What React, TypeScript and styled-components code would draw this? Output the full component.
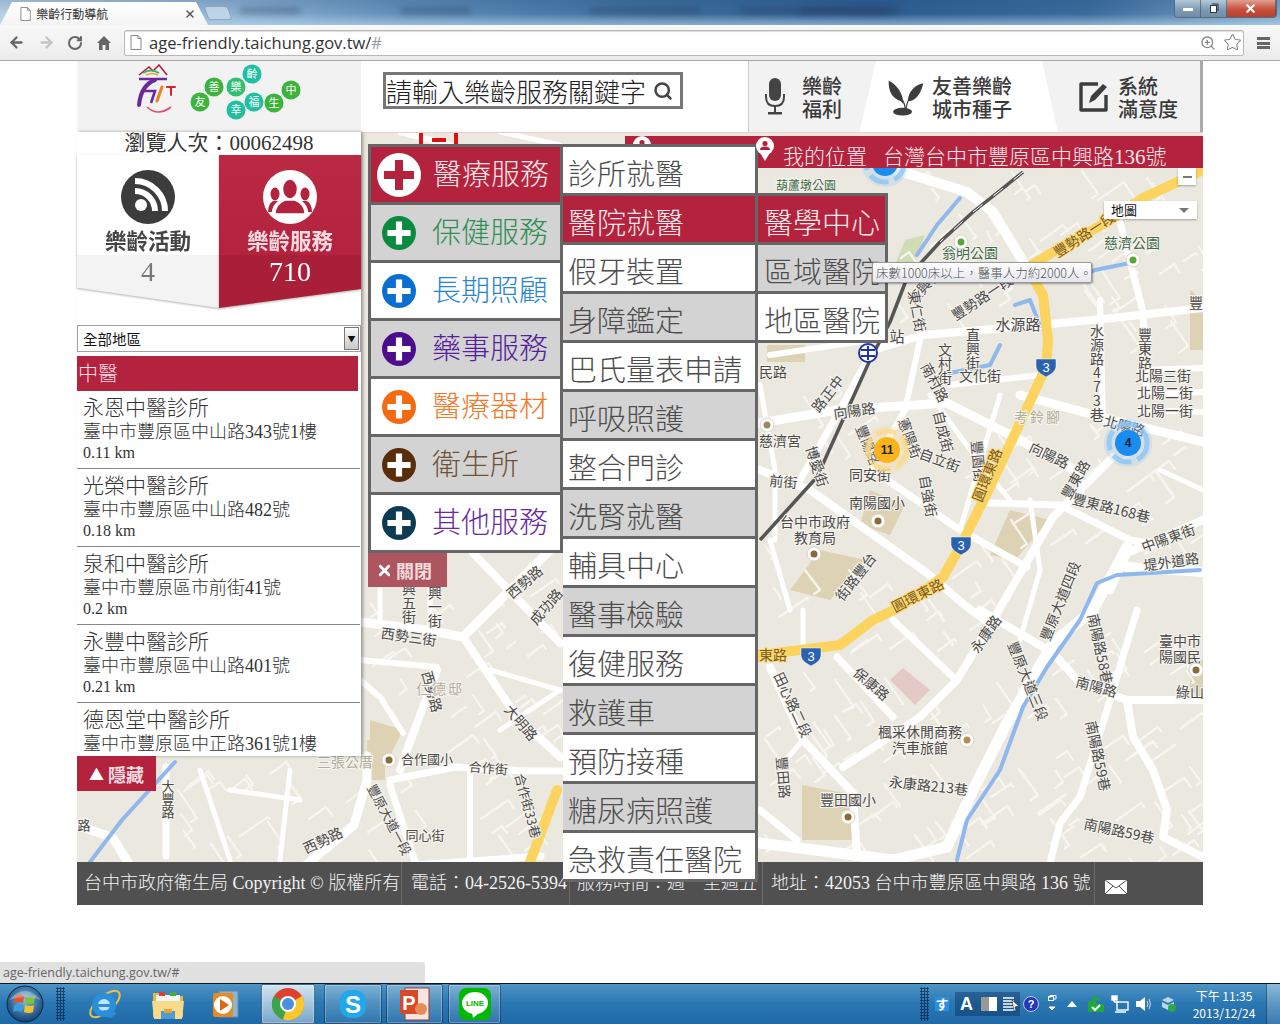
import React from "react";
import styled, { createGlobalStyle } from "styled-components";
import { ArrowLeft, ArrowRight, RotateCw, Search, Star, ZoomIn, X } from "lucide-react";

const CJK = `"Liberation Serif", "Noto Sans CJK TC", serif`;
const CRIMSON = "#b3233d";

const Global = createGlobalStyle`
  html, body { margin: 0; padding: 0; background: #fff; }
  body { font-family: ${CJK}; overflow: hidden; }
  * { box-sizing: border-box; }
`;

const Screen = styled.div`
  width: 1280px; height: 1024px; display: flex; flex-direction: column; position: relative; overflow: hidden;
`;

/* ---------- browser chrome ---------- */
const TitleBar = styled.div`
  height: 25px; flex: none; position: relative; overflow: hidden;
  background:
    linear-gradient(180deg, rgba(30,70,120,.18) 0, rgba(255,255,255,0) 55%, rgba(190,220,240,.6) 100%),
    linear-gradient(90deg, #b7cfe3 0, #8fb2d2 18%, #5f8db8 32%, #3f6f9e 50%, #2c5c90 68%, #3a6b9c 85%, #7ea6c8 100%);
`;
const BlurText = styled.div<{ $x: number; $w: number }>`
  position: absolute; left: ${p => p.$x}px; width: ${p => p.$w}px; top: 8px; height: 5px;
  background: rgba(40,60,90,.45); filter: blur(3px);
`;
const TabShape = styled.div`
  position: absolute; left: 0; top: 2px; width: 208px; height: 23px; padding: 0 0 0 20px;
  background: linear-gradient(180deg, #fff, #f4f4f4);
  clip-path: polygon(0 100%, 12px 0, 196px 0, 100% 100%);
  display: flex; align-items: center; gap: 5px;
  font: 12px "Noto Sans CJK TC", sans-serif; color: #333;
`;
const TabTitle = styled.span` width: 143px; `;
const NewTab = styled.div`
  position: absolute; left: 206px; top: 6px; width: 24px; height: 14px;
  background: rgba(200,220,235,.8); border: 1px solid rgba(120,150,180,.7); border-radius: 3px;
  transform: skewX(20deg);
`;
const WinButtons = styled.div`
  position: absolute; right: 3px; top: 0; width: 103px; height: 18px; display: flex;
  border: 1px solid #5a6b80; border-top: 0; border-radius: 0 0 4px 4px; overflow: hidden;
`;
const WinBtn = styled.div<{ $close?: boolean; $w: number }>`
  width: ${p => p.$w}px; display: flex; align-items: center; justify-content: center; color: #fff;
  border-right: 1px solid rgba(60,80,100,.6);
  background: ${p => p.$close
    ? "linear-gradient(180deg,#e0a090,#c8503c 55%,#b84030)"
    : "linear-gradient(180deg,#b4c8da,#7f9bb5 55%,#6f8da8)"};
`;

const Toolbar = styled.div`
  height: 36px; flex: none; display: flex; align-items: center; padding: 0 8px; color: #6a6a6a;
  background: linear-gradient(180deg, #f8f8f8, #ececec); border-bottom: 1px solid #a8a8a8;
`;
const NavIcon = styled.span<{ $w: number; $c?: string }>`
  width: ${p => p.$w}px; display: flex; align-items: center; color: ${p => p.$c || "#666"};
`;
const Omnibox = styled.div`
  width: 1120px; height: 26px; background: #fff; border: 1px solid #bdb8b4; border-radius: 2px;
  display: flex; align-items: center; padding: 0 1px 0 5px; gap: 7px;
  font: 16.5px "Open Sans", "Liberation Sans", sans-serif; color: #333; box-shadow: inset 0 1px 1px #ddd;
`;
const UrlHash = styled.span` color: #999; margin-left: -7px; `;
const Spacer = styled.span` flex: 1; `;
const Burger = styled.div`
  margin-left: 13px; width: 13px; height: 12px; border-top: 3px solid #666; border-bottom: 3px solid #666; position: relative;
  &::after { content: ""; position: absolute; left: 0; right: 0; top: 2px; height: 3px; background: #666; }
`;

/* ---------- page frame ---------- */
const Viewport = styled.div` flex: 1; background: #fff; padding-left: 77px; `;
const Frame = styled.div` width: 1126px; `;

const Header = styled.header` height: 71px; display: flex; align-items: stretch; background: #fff; `;
const LogoBlock = styled.div`
  width: 284px; background: #f2f2f2; display: flex; justify-content: center; align-items: flex-start; padding-top: 3px;
`;
const SearchBox = styled.div`
  margin: 11px 0 0 22px; width: 300px; height: 37px; border: 3px solid #777; display: flex; align-items: center;
  font: 26px/1 "Noto Sans CJK TC", sans-serif; font-weight: 300; color: #222; gap: 2px; white-space: nowrap;
  overflow: hidden;
`;
const Nav = styled.nav`
  margin-left: 65px; width: 455px; display: flex; position: relative; border-right: 3px solid #aaa; border-left: 1px solid #ccc;
  font: 500 20px/23px "Noto Sans CJK TC", sans-serif; color: #3a3a3a; overflow: hidden;
`;
const NavTab = styled.div<{ $w: number; $clip: string; $bg: string; $pl: number; $gap: number }>`
  width: ${p => p.$w}px; flex: none; display: flex; align-items: center; gap: ${p => p.$gap}px; padding-left: ${p => p.$pl}px;
  background: ${p => p.$bg}; clip-path: ${p => p.$clip}; margin-right: -16px;
`;
const NavLabel = styled.div` white-space: nowrap; `;

const Stage = styled.div`
  height: 730px; position: relative; display: flex; align-items: flex-start; overflow: visible;
  &::before { content: ""; position: absolute; left: 0; right: 0; top: 0; height: 1px; background: #f3c9d0; z-index: 1; }
`;
const MapLayer = styled.svg` position: absolute; left: 0; top: 0; width: 1126px; height: 730px; display: block; `;

const LeftColumn = styled.div` width: 284px; position: relative; z-index: 2; display: flex; flex-direction: column; align-items: flex-start; `;
const Sidebar = styled.aside`
  width: 284px; height: 624px; background: #fff; box-shadow: 2px 0 3px rgba(0,0,0,.35);
`;
const Visits = styled.div` height: 23px; padding-top: 1px; text-align: center; font-size: 21px; line-height: 20px; color: #333; `;
const Tabs = styled.div` display: flex; height: 153px; `;
const TabCol = styled.div` width: 142px; display: flex; flex-direction: column; filter: drop-shadow(0 1px 1px rgba(0,0,0,.3)); `;
const TabTop = styled.div<{ $active?: boolean }>`
  height: 100px; display: flex; flex-direction: column; align-items: center; padding-top: 15px; gap: 3px;
  background: ${p => p.$active ? "linear-gradient(180deg,#bb2a44,#b3233d)" : "#fff"};
  color: ${p => p.$active ? "#f7dbe0" : "#444"};
  font: 700 21.5px/26px "Noto Sans CJK TC", sans-serif;
`;
const TabCount = styled.div<{ $active?: boolean; $clip: string }>`
  height: 53px; text-align: center; font-size: 28px; line-height: 34px;
  color: ${p => p.$active ? "#fff" : "#777"}; background: ${p => p.$active ? "#a91f38" : "#f3f3f3"};
  clip-path: ${p => p.$clip};
`;
const DistrictSelect = styled.div`
  margin-top: 17px; width: 284px; height: 27px; border: 1px solid #a0a0a0; display: flex; align-items: center; justify-content: space-between;
  font: 14.5px "Noto Sans CJK TC", sans-serif; color: #111; padding-left: 5px;
`;
const SelectArrow = styled.div`
  width: 15px; height: 23px; margin-right: 1px; border: 1px solid #777; background: linear-gradient(180deg,#fafafa,#c8c8c8);
  display: flex; align-items: center; justify-content: center; font-size: 8px; color: #111;
`;
const ListHead = styled.div`
  margin-top: 4px; width: 281px; height: 35px; background: ${CRIMSON}; color: #f6dfe3; padding-left: 1px;
  font: 300 20px/33px "Noto Sans CJK TC", sans-serif;
`;
const ClinicList = styled.div` height: 365px; overflow: hidden; `;
const ClinicRow = styled.div`
  height: 78px; padding: 3px 0 0 6px; border-bottom: 1px solid #888; color: #333; width: 283px;
`;
const ClinicName = styled.div` font: 300 21px/24px "Noto Sans CJK TC", sans-serif; `;
const ClinicAddr = styled.div` margin-top: 3px; font: 300 18px/22px "Liberation Serif", "Noto Sans CJK TC", serif; `;
const ClinicDist = styled.div` font-size: 16px; line-height: 20px; `;
const HideBtn = styled.div`
  width: 79px; height: 35px; background: ${CRIMSON}; color: #f3dde1; display: flex; align-items: center; justify-content: center;
  font: 700 18px "Noto Sans CJK TC", sans-serif; gap: 4px;
`;
const HideTri = styled.span` font-size: 15px; color: #fff; `;

/* ---------- menu ---------- */
const Menu = styled.div`
  position: absolute; left: 291px; top: 12px; display: flex; align-items: flex-start; z-index: 5;
`;
const MainWrap = styled.div` width: 195px; display: flex; flex-direction: column; `;
const MainCol = styled.div`
  background: #666; padding: 3px; display: flex; flex-direction: column; gap: 3px;
`;
const MainItem = styled.div<{ $bg: string; $c: string; $active?: boolean }>`
  height: 55px; background: ${p => p.$bg}; color: ${p => p.$c}; display: flex; align-items: center;
  padding-left: ${p => p.$active ? 6 : 11}px; gap: ${p => p.$active ? 12 : 16}px;
  font: 300 29px/51px "Noto Sans CJK TC", sans-serif; white-space: nowrap;
`;
const MainText = styled.span` position: relative; top: -2px; `;
const CloseBtn = styled.div`
  width: 79px; height: 34px; background: #ad565f; color: #f1dcdc; display: flex; align-items: center; padding-left: 8px; gap: 3px;
  font: 700 18px "Noto Sans CJK TC", sans-serif;
`;
const SubCol = styled.div<{ $w: number; $top: number }>`
  width: ${p => p.$w}px; margin-top: ${p => p.$top}px; background: #666; padding: 3px 3px 3px 0;
  display: flex; flex-direction: column; gap: 3px;
`;
const SubItem = styled.div<{ $tone: "white" | "grey" | "active"; $pl: number }>`
  height: 46px; padding: 3px 0 0 ${p => p.$pl}px; display: flex; align-items: center; white-space: nowrap;
  font: 300 29px/40px "Noto Sans CJK TC", sans-serif;
  color: ${p => p.$tone === "active" ? "#fbe9ec" : "#4d4d4d"};
  background: ${p => p.$tone === "active" ? CRIMSON : p.$tone === "grey" ? "#d3d3d3" : "#fff"};
`;

const LocationBar = styled.div`
  position: absolute; left: 548px; top: 4px; width: 578px; height: 32px; background: ${CRIMSON}; color: #fbe6ea; z-index: 3;
  display: flex; align-items: center; padding: 5px 0 0 158px; gap: 16px;
  font: 300 21px "Liberation Serif", "Noto Sans CJK TC", serif; white-space: nowrap;
`;
const LocPin = styled.svg<{ $left: number; $top: number }>`
  position: absolute; left: ${p => p.$left}px; top: ${p => p.$top}px; z-index: 6;
`;
const Tooltip = styled.div`
  position: absolute; left: 795px; top: 130px; width: 220px; height: 21px; z-index: 7; white-space: nowrap;
  background: linear-gradient(180deg,#fff,#e5e6ee); border: 1px solid #999; border-radius: 2px; box-shadow: 1px 1px 2px rgba(0,0,0,.35);
  font: 300 12.5px/19px "Noto Sans CJK TC", sans-serif; color: #555; padding-left: 3px;
`;
const MapType = styled.div`
  position: absolute; left: 1027px; top: 69px; width: 93px; height: 18px; background: #fff; z-index: 2;
  font: 13px/18px "Noto Sans CJK TC", sans-serif; color: #111; padding-left: 7px; box-shadow: 0 1px 2px rgba(0,0,0,.3);
  display: flex; justify-content: space-between; align-items: center; padding-right: 8px;
`;
const Caret = styled.span`
  width: 0; height: 0; border-left: 5px solid transparent; border-right: 5px solid transparent; border-top: 5px solid #777;
`;
const ZoomOut = styled.div`
  position: absolute; left: 1101px; top: 36px; width: 18px; height: 17px; background: #fff; z-index: 2; box-shadow: 0 1px 2px rgba(0,0,0,.3);
  display: flex; align-items: center; justify-content: center;
  &::after { content: ""; width: 9px; height: 2px; background: #777; }
`;

/* ---------- footer ---------- */
const Footer = styled.footer`
  height: 43px; background: #505050; display: flex; color: #f2f2f2; position: relative; z-index: 1;
  font: 300 18px/43px "Liberation Serif", "Noto Sans CJK TC", serif; white-space: nowrap;
`;
const FootCell = styled.div<{ $w: number; $pl?: number }>`
  width: ${p => p.$w}px; flex: none; padding-left: ${p => p.$pl ?? 7}px; border-right: 1px solid #6c6c6c; overflow: hidden;
`;
const MailBox = styled.div` padding: 17px 0 0 9px; `;
const MailSvg = styled.svg` display: block; `;

/* ---------- OS ---------- */
const StatusBubble = styled.div`
  position: absolute; left: 0; top: 962px; width: 425px; height: 22px; background: #e1e1e1; border-radius: 0 3px 0 0;
  font: 12.5px/22px "Open Sans", "Liberation Sans", sans-serif; color: #666; padding-left: 3px;
`;
const Taskbar = styled.div`
  height: 41px; flex: none; border-top: 1px solid #0c1a26; display: flex; align-items: center; position: relative;
  background: linear-gradient(180deg,#4f95c6 0,#2b79b4 45%,#1f69a6 100%);
`;
const Orb = styled.div` width: 50px; flex: none; display: flex; justify-content: center; `;
const Grip = styled.div<{ $ml: number }>`
  width: 9px; height: 34px; flex: none; margin-left: ${p => p.$ml}px;
  background-image: radial-gradient(circle, rgba(0,20,50,.6) 1px, transparent 1.2px); background-size: 3px 3px;
`;
const TaskSlots = styled.div` display: flex; margin-left: 9px; height: 40px; `;
const TaskSlot = styled.div<{ $w: number; $mr: number; $state?: "open" | "active" }>`
  width: ${p => p.$w}px; display: flex; align-items: center; justify-content: center; margin-right: ${p => p.$mr}px; border-radius: 2px;
  background: ${p => p.$state === "active" ? "linear-gradient(180deg,rgba(255,255,255,.75),rgba(255,255,255,.4))" : p.$state === "open" ? "linear-gradient(180deg,rgba(255,255,255,.28),rgba(255,255,255,.08))" : "transparent"};
  border: ${p => p.$state ? "1px solid rgba(0,30,60,.55)" : "0"};
  box-shadow: ${p => p.$state ? "inset 0 0 0 1px rgba(255,255,255,.25)" : "none"};
`;
const Tray = styled.div`
  margin-left: auto; display: flex; align-items: center; height: 40px; color: #fff;
`;
const TrayIcons = styled.div` display: flex; align-items: center; `;
const TrayBox = styled.div<{ $w: number; $lang?: boolean }>`
  width: ${p => p.$w}px; height: 24px; display: flex; align-items: center; justify-content: center; font: 700 18px "Liberation Sans", sans-serif;
  background: ${p => p.$lang ? "rgba(10,40,90,.4)" : "transparent"};
`;
const Clock = styled.div`
  width: 78px; text-align: center; font: 12px/17px "Noto Sans CJK TC", sans-serif; color: #fff; margin-left: 5px;
`;
const ShowDesk = styled.div`
  width: 14px; height: 40px; background: linear-gradient(180deg,rgba(255,255,255,.35),rgba(255,255,255,.12)); border-left: 1px solid rgba(0,20,40,.5); margin-left: 3px;
`;

/* ---------- map data (page coordinates) ---------- */
type Road = [number, string];
const ROADS: Road[] = [
  [9, "M760 423 L837 410 L947 403 L1020 440 L1080 473"],
  [9, "M1020 395 L1113 420 L1203 442"],
  [7, "M877 473 L960 530 L1027 567"],
  [8, "M760 470 L810 490 L927 573 L967 607 L985 620"],
  [8, "M1113 457 L1053 517 L993 620 L957 680 L920 717 L843 767"],
  [7, "M990 503 L1060 505 L1130 540 L1160 545"],
  [8, "M1203 520 L1127 553 L1110 590"],
  [10, "M1127 567 L1203 572"],
  [11, "M1127 547 L1093 610 L1053 643 L1007 723 L973 790 L947 847 L893 860 L760 843"],
  [8, "M980 610 L1053 653 L1080 683 L1127 700 L1203 700"],
  [8, "M1127 700 L1133 737 L1153 770 L1167 810 L1163 837 L1203 857"],
  [7, "M1137 610 L1107 710 L1080 797 L1060 823 L1050 863"],
  [7, "M837 657 L893 717"],
  [7, "M893 620 L953 677"],
  [8, "M770 667 L803 740 L853 793 L857 857"],
  [7, "M760 810 L797 840"],
  [5, "M783 763 L803 740"],
  [5, "M803 610 L803 643"],
  [10, "M890 168 L967 192 L993 212 L1027 268"],
  [8, "M880 348 L923 335 L1040 325 L1113 318 L1203 308"],
  [7, "M1120 222 L1143 312 L1147 395"],
  [6, "M1100 300 L1103 420"],
  [6, "M1140 370 L1203 368"],
  [6, "M1140 395 L1203 392"],
  [6, "M1140 410 L1203 412"],
  [6, "M770 355 L870 340"],
  [7, "M870 355 L840 410 L800 480"],
  [6, "M920 340 L905 410 L870 470"],
  [6, "M950 385 L1040 375"],
  [5, "M930 395 L985 470 L1010 500"],
  [5, "M1000 395 L960 530"],
  [5, "M760 385 L775 470 L775 540"],
  [5, "M770 540 L790 610"],
  [5, "M1030 500 L1040 570 L1020 640"],
  [5, "M1160 470 L1203 490"],
  [9, "M360 622 L427 630 L463 637 L507 593 L560 540"],
  [8, "M473 553 L560 643"],
  [8, "M437 670 L407 750 L400 770"],
  [8, "M463 637 L517 717 L560 757"],
  [6, "M360 660 L437 667"],
  [6, "M360 680 L380 697 L403 733"],
  [5, "M490 670 L560 690"],
  [5, "M500 730 L560 690"],
  [5, "M380 560 L380 622"],
  [5, "M430 560 L430 630"],
  [9, "M77 825 L113 838 L135 874"],
  [7, "M166 767 L166 856"],
  [9, "M264 900 L354 825 L367 780 L367 756"],
  [7, "M390 785 L416 865 L541 856"],
  [7, "M390 780 L456 767 L523 771 L563 771"],
  [6, "M470 770 L470 865"],
  [5, "M200 770 L230 860"],
  [5, "M230 790 L300 800"],
  [5, "M290 770 L280 860"],
  [6, "M400 132 L450 145"],
  [5, "M500 132 L560 145"],
];
/* deterministic thin alleys that give the map its dense street texture */
const makeAlleys = (): string[] => {
  const regions = [
    [765, 545, 1000, 860], [1000, 430, 1203, 560], [1100, 600, 1203, 860], [890, 170, 1203, 330],
    [950, 420, 1100, 500], [365, 590, 560, 760], [170, 770, 540, 860], [800, 360, 880, 440], [1000, 640, 1100, 860],
  ];
  let seed = 7;
  const rnd = () => { seed = (seed * 16807) % 2147483647; return seed / 2147483647; };
  const out: string[] = [];
  regions.forEach(([x0, y0, x1, y1]) => {
    const n = Math.round(((x1 - x0) * (y1 - y0)) / 1100);
    for (let i = 0; i < n; i++) {
      const x = x0 + rnd() * (x1 - x0);
      const y = y0 + rnd() * (y1 - y0);
      const a = (rnd() > 0.5 ? -35 : 55) * Math.PI / 180;
      const len = 10 + rnd() * 24;
      const bx = x + Math.cos(a) * len;
      const by = y + Math.sin(a) * len;
      const turn = a + Math.PI / 2;
      const l2 = rnd() * 12;
      out.push(`M${x.toFixed(0)} ${y.toFixed(0)} L${bx.toFixed(0)} ${by.toFixed(0)} L${(bx + Math.cos(turn) * l2).toFixed(0)} ${(by + Math.sin(turn) * l2).toFixed(0)}`);
    }
  });
  return out;
};
const ALLEYS = makeAlleys();
const RIVERS: string[] = [
  "M1200 570 L1117 575 L1097 583 L1080 620 L1047 667 L1023 707 L1000 770 L967 820 L957 860",
  "M960 198 L937 225 L917 255",
  "M1040 326 L1030 300 L1015 305",
  "M1135 262 L1095 270 L1085 275",
  "M175 762 L122 820 L90 862",
  "M940 375 L990 365 L1000 345",
];
type Label = { t: string; x: number; y: number; r?: number; s?: number; c?: string; v?: boolean; ls?: number; halo?: string };
const GOLD = "#7a5a20";
const LABELS: Label[] = [
  { t: "葫蘆墩公園", x: 806, y: 190, s: 12, c: "#3d6b4a" },
  { t: "翁明公園", x: 970, y: 258, s: 14, c: "#3d6b4a" },
  { t: "慈濟公園", x: 1132, y: 248, s: 14, c: "#3d6b4a" },
  { t: "豐勢路一段", x: 1087, y: 239, r: -33, s: 14, c: GOLD, halo: "#fdd873" },
  { t: "東興街", x: 928, y: 290, r: -48 },
  { t: "豐勢路一段", x: 985, y: 302, r: -33 },
  { t: "東仁街", x: 912, y: 312, r: 80 },
  { t: "水源路", x: 1018, y: 330, s: 15 },
  { t: "水源路473巷", x: 1097, y: 324, v: true },
  { t: "豐東路", x: 1145, y: 328, v: true },
  { t: "文村街", x: 945, y: 343, v: true },
  { t: "直興街", x: 973, y: 328, v: true },
  { t: "文化街", x: 980, y: 381 },
  { t: "站", x: 897, y: 342, s: 15 },
  { t: "南村路", x: 930, y: 385, r: 62 },
  { t: "北陽三街", x: 1163, y: 381 },
  { t: "北陽二街", x: 1165, y: 398 },
  { t: "北陽一街", x: 1165, y: 416 },
  { t: "北陽路", x: 1123, y: 431, r: 15 },
  { t: "豐", x: 1196, y: 308 },
  { t: "考鈴腳", x: 1038, y: 422, c: "#b3ad9c", ls: 2 },
  { t: "向陽路", x: 855, y: 416, r: -8 },
  { t: "向陽路", x: 1047, y: 460, r: 25 },
  { t: "民路", x: 773, y: 377 },
  { t: "路正中", x: 832, y: 397, r: -52 },
  { t: "博愛街", x: 812, y: 468, r: 72 },
  { t: "慈濟宮", x: 780, y: 446 },
  { t: "前街", x: 783, y: 487, r: 5 },
  { t: "豐陽路", x: 863, y: 447, r: 68 },
  { t: "憲陽街", x: 905, y: 440, r: 70 },
  { t: "同安街", x: 870, y: 480 },
  { t: "自成街", x: 938, y: 433, r: 76 },
  { t: "自立街", x: 938, y: 465, r: 20 },
  { t: "自強街", x: 923, y: 497, r: 80 },
  { t: "豐園街", x: 973, y: 462, r: 85 },
  { t: "圓環東路", x: 992, y: 477, r: -68, c: GOLD, halo: "#fdd873" },
  { t: "豐東路", x: 1080, y: 482, r: -60 },
  { t: "豐東路168巷", x: 1110, y: 513, r: 14 },
  { t: "南陽國小", x: 877, y: 508 },
  { t: "台中市政府", x: 815, y: 527 },
  { t: "教育局", x: 815, y: 543 },
  { t: "中陽東街", x: 1170, y: 543, r: -20 },
  { t: "堤外道路", x: 1172, y: 567, r: -8 },
  { t: "豐原大道四段", x: 1065, y: 603, r: -68 },
  { t: "街路豐台", x: 860, y: 580, r: -52 },
  { t: "圓環東路", x: 920, y: 600, r: -27, c: GOLD, halo: "#fdd873" },
  { t: "東路", x: 773, y: 660, c: GOLD, halo: "#fdd873" },
  { t: "永康路", x: 990, y: 637, r: -55 },
  { t: "保康路", x: 868, y: 688, r: 40 },
  { t: "豐原大道三段", x: 1023, y: 683, r: 68 },
  { t: "南陽路58巷", x: 1095, y: 650, r: 78 },
  { t: "南陽路", x: 1095, y: 692, r: 15 },
  { t: "臺中市", x: 1180, y: 646 },
  { t: "陽國民", x: 1180, y: 662 },
  { t: "綠山", x: 1190, y: 697 },
  { t: "南陽路59巷", x: 1093, y: 757, r: 78 },
  { t: "南陽路59巷", x: 1118, y: 836, r: 12 },
  { t: "楓采休閒商務", x: 920, y: 737 },
  { t: "汽車旅館", x: 920, y: 753 },
  { t: "永康路213巷", x: 928, y: 791, r: 6 },
  { t: "豐田路", x: 778, y: 778, r: 85 },
  { t: "豐田國小", x: 848, y: 805 },
  { t: "田心路二段", x: 788, y: 707, r: 65 },
  { t: "興五街", x: 409, y: 582, v: true },
  { t: "仁興一街", x: 435, y: 572, v: true },
  { t: "西勢三街", x: 408, y: 642, r: 8 },
  { t: "西勢路", x: 427, y: 693, r: 75 },
  { t: "西勢路", x: 528, y: 586, r: -40 },
  { t: "成功路", x: 550, y: 610, r: -50 },
  { t: "仁德邸", x: 440, y: 694, c: "#b3ad9c", ls: 2 },
  { t: "大明路", x: 517, y: 726, r: 50 },
  { t: "三張公厝", x: 345, y: 767, c: "#b3ad9c" },
  { t: "合作國小", x: 427, y: 764, s: 13 },
  { t: "合作街", x: 488, y: 773, r: 5, s: 13 },
  { t: "合作街33巷", x: 523, y: 807, r: 75, s: 13 },
  { t: "同心街", x: 425, y: 840, s: 13 },
  { t: "西勢路", x: 325, y: 845, r: -25 },
  { t: "大豐路", x: 168, y: 780, v: true, s: 13 },
  { t: "豐原大道一段", x: 385, y: 822, r: 62, s: 13 },
  { t: "路", x: 84, y: 830, s: 13 },
];
const TAN = [
  "M767 345 L805 345 L805 362 L767 362 Z",
  "M820 550 L865 560 L830 600 L790 590 Z",
  "M870 490 L905 505 L890 535 L860 525 Z",
  "M1010 510 L1050 520 L1015 560 L990 555 Z",
  "M802 785 L855 795 L855 840 L802 840 Z",
  "M1190 660 L1203 660 L1203 700 L1190 690 Z",
  "M367 740 L385 740 L385 780 L367 780 Z",
  "M370 720 L403 730 L390 756 L370 756 Z",
  "M1190 290 L1203 300 L1203 350 L1190 350 Z",
];

const Cluster: React.FC<{ x: number; y: number; c: string; halo: string; n?: string; tc: string }> = ({ x, y, c, halo, n, tc }) => (
  <g>
    <circle cx={x} cy={y} r={24} fill={halo} opacity={0.25} />
    <circle cx={x} cy={y} r={19} fill="none" stroke={halo} strokeWidth={5} strokeDasharray="20 6" opacity={0.8} />
    <circle cx={x} cy={y} r={13} fill={c} />
    {n && <text x={x} y={y + 4} textAnchor="middle" fontSize={12} fontWeight={700} fill={tc} fontFamily="Liberation Sans, sans-serif">{n}</text>}
  </g>
);
const Shield: React.FC<{ x: number; y: number }> = ({ x, y }) => (
  <g>
    <path d={`M${x - 10} ${y - 7} H${x + 10} V${y + 1} C${x + 9} ${y + 7} ${x + 3} ${y + 9} ${x} ${y + 11} C${x - 3} ${y + 9} ${x - 9} ${y + 7} ${x - 10} ${y + 1} Z`} fill="#2a62b0" stroke="#fff" strokeWidth={0.5} />
    <text x={x} y={y + 6} textAnchor="middle" fontSize={13} fill="#fff" fontFamily="Liberation Sans, sans-serif">3</text>
  </g>
);
const Poi: React.FC<{ x: number; y: number; c: string }> = ({ x, y, c }) => (
  <g>
    <circle cx={x} cy={y} r={7} fill="#fff" stroke="#d8d3c4" />
    <circle cx={x} cy={y} r={3.5} fill={c} />
  </g>
);

const CityMap = () => (
  <MapLayer viewBox="77 132 1126 730">
    <rect x={77} y={132} width={1126} height={730} fill="#ebe8df" />
    {TAN.map((d, i) => <path key={i} d={d} fill="#ddd3b4" />)}
    <path d="M903 668 L930 690 L915 705 L890 680 Z" fill="#e5c9c6" />
    <path d="M905 240 L925 235 L915 262 L895 265 Z" fill="#cfdcb4" />
    <g fill="none" stroke="#f7f5ef" strokeWidth={2.2} strokeLinecap="round" strokeLinejoin="round">
      {ALLEYS.map((d, i) => <path key={i} d={d} />)}
    </g>
    <g fill="none" stroke="#fff" strokeLinecap="round" strokeLinejoin="round">
      {ROADS.map(([w, d], i) => <path key={i} d={d} strokeWidth={w} />)}
    </g>
    <g fill="none" stroke="#8fb8ee" strokeWidth={4} strokeLinecap="round" strokeLinejoin="round">
      {RIVERS.map((d, i) => <path key={i} d={d} />)}
    </g>
    <g fill="none" stroke="#fcd35f" strokeWidth={10} strokeLinejoin="round" strokeLinecap="round">
      <path d="M1203 170 L1143 198 L1107 222 L1053 252 L1027 268 L1043 295 L1048 340 L1046 367 L1020 423 L987 493 L960 547 L943 577 L900 607 L873 620 L840 645 L760 655" />
      <path d="M557 790 L530 862" />
    </g>
    <g fill="none" strokeLinejoin="round">
      <path d="M1023 172 L997 193 L973 212 L940 242 L907 278 L890 322 L870 360 L817 477 L760 540" stroke="#555" strokeWidth={3.5} />
      <path d="M1023 172 L997 193 L973 212 L940 242" stroke="#fff" strokeWidth={1} strokeDasharray="12 14" />
    </g>
    {LABELS.map((l, i) => (
      <text
        key={i}
        x={l.x}
        y={l.y}
        textAnchor={l.v ? "start" : "middle"}
        fontSize={l.s ?? 14}
        fill={l.c ?? "#4a4a4a"}
        fontFamily="Noto Sans CJK TC, sans-serif"
        letterSpacing={l.ls ?? 0}
        stroke={l.halo ?? "#f6f4ee"}
        strokeWidth={2}
        paintOrder="stroke"
        transform={l.r ? `rotate(${l.r} ${l.x} ${l.y})` : undefined}
        style={l.v ? { writingMode: "vertical-rl", textOrientation: "upright" } : undefined}
      >
        {l.t}
      </text>
    ))}
    <Shield x={1046} y={366} />
    <Shield x={961} y={544} />
    <Shield x={811} y={655} />
    <circle cx={868} cy={353} r={9} fill="#fff" stroke="#2033a8" strokeWidth={2} />
    <path d="M861 350 H875 M861 356 H875 M868 346 V360" stroke="#2033a8" strokeWidth={2} />
    <Poi x={961} y={242} c="#5aa63a" />
    <Poi x={1133} y={260} c="#5aa63a" />
    <Poi x={878} y={521} c="#8a6a3a" />
    <Poi x={814} y={554} c="#8a6a3a" />
    <Poi x={967} y={740} c="#b88a5a" />
    <Poi x={848} y={817} c="#8a6a3a" />
    <Poi x={1196} y={670} c="#8a6a3a" />
    <Poi x={389} y={760} c="#8a6a3a" />
    <Poi x={767} y={425} c="#9a8a6a" />
    <Cluster x={1128} y={443} c="#1a8cf0" halo="#8cc4f5" n="4" tc="#123" />
    <Cluster x={887} y={450} c="#fbb41a" halo="#fbd98a" n="11" tc="#222" />
    <Cluster x={885} y={163} c="#1a8cf0" halo="#8cc4f5" tc="#123" />
    <path d="M421 132 V146 M456 132 V146 M432 140 H446" fill="none" stroke="#d11" strokeWidth={4} />
  </MapLayer>
);

/* ---------- icons ---------- */
const Logo = () => (
  <svg width="170" height="62" viewBox="0 0 170 62">
    <g transform="translate(-9 -3)">
      <path d="M14 14 L24 6 L28 10 L34 4 L42 14" fill="none" stroke="#b2183a" strokeWidth="1.5" />
      <path d="M18 12 Q26 7 34 12" fill="none" stroke="#3bb273" strokeWidth="2" />
      <path d="M21 14 Q27 11 33 14" fill="none" stroke="#f0a020" strokeWidth="1.6" />
      <path d="M14 18 H42" stroke="#6a2a9a" strokeWidth="2.5" />
      <path d="M30 19 Q16 24 14 44" fill="none" stroke="#6a2a9a" strokeWidth="4" strokeLinecap="round" />
      <path d="M18 30 H30 L26 42" fill="none" stroke="#6a2a9a" strokeWidth="2.6" />
      <path d="M37 26 L32 40" stroke="#f0801e" strokeWidth="3" strokeLinecap="round" />
      <path d="M42 26 H50 M46 26 V34" stroke="#d6232f" strokeWidth="2" strokeLinecap="round" />
      <path d="M22 46 Q33 56 46 46" fill="none" stroke="#e05070" strokeWidth="1.6" />
    </g>
    {[
      [66, 38, "友", "#3cb43c"], [80, 23, "善", "#3cb43c"], [102, 23, "樂", "#2fbf6f"],
      [118, 10, "齡", "#1fbfa0"], [102, 46, "幸", "#1fbfa0"], [120, 38, "福", "#1fbfa0"],
      [140, 39, "生", "#3cb43c"], [157, 26, "中", "#3cb43c"],
    ].map(([x, y, t, c]) => (
      <g key={String(t)}>
        <ellipse cx={x as number} cy={y as number} rx={9.5} ry={9.5} fill={c as string} />
        <text x={x as number} y={(y as number) + 4} textAnchor="middle" fontSize={11} fill="#fff" fontFamily="Noto Sans CJK TC, sans-serif">{t}</text>
      </g>
    ))}
  </svg>
);
const MicIcon = () => (
  <svg width="22" height="40" viewBox="0 0 22 40" fill="#444">
    <rect x="5" y="1" width="12" height="23" rx="6" />
    <path d="M2 17 V20 Q2 29 11 29 Q20 29 20 20 V17" fill="none" stroke="#444" strokeWidth="2" />
    <rect x="10" y="29" width="2" height="6" />
    <rect x="4" y="35" width="14" height="2.5" />
  </svg>
);
const SproutIcon = () => (
  <svg width="40" height="38" viewBox="0 0 40 44" fill="#3d3d3d">
    <path d="M17 30 Q16 12 0 3 Q-1 22 14 27 Z" />
    <path d="M22 26 Q24 10 40 6 Q36 24 24 27 Z" />
    <path d="M16 26 Q19 30 19 38 M24 24 Q20 30 20 38" stroke="#3d3d3d" strokeWidth="1.4" fill="none" />
    <ellipse cx="16" cy="39" rx="11" ry="4.5" />
  </svg>
);
const EditIcon = () => (
  <svg width="32" height="32" viewBox="0 0 32 32" fill="none">
    <path d="M20 3 H3 V29 H28 V14" stroke="#3d3d3d" strokeWidth="3.4" strokeLinejoin="round" />
    <path d="M11 22 L13 15 L25 3 L29 6 L17 19 Z" fill="#3d3d3d" />
  </svg>
);
const RssBadge = () => (
  <svg width="54" height="54" viewBox="0 0 54 54">
    <circle cx="27" cy="27" r="27" fill="#3c3c3c" />
    <circle cx="20" cy="35" r="6" fill="#fff" />
    <path d="M14 21 A20 20 0 0 1 34 41" fill="none" stroke="#fff" strokeWidth="6" />
    <path d="M14 11 A30 30 0 0 1 44 41" fill="none" stroke="#fff" strokeWidth="6" />
  </svg>
);
const PeopleBadge = () => (
  <svg width="54" height="54" viewBox="0 0 54 54">
    <circle cx="27" cy="27" r="27" fill="#fff" />
    <g fill={CRIMSON}>
      <ellipse cx="12" cy="24" rx="4.5" ry="6.5" />
      <ellipse cx="42" cy="24" rx="4.5" ry="6.5" />
      <path d="M5 42 Q5 34 10 31 L15 31 Q9 36 9 42 Z" />
      <path d="M49 42 Q49 34 44 31 L39 31 Q45 36 45 42 Z" />
      <path d="M12 44 Q12 34 22 30 L32 30 Q42 34 42 44 Z" stroke="#fff" strokeWidth="1.5" />
      <ellipse cx="27" cy="19" rx="7.5" ry="10" stroke="#fff" strokeWidth="1.5" />
    </g>
  </svg>
);
const PlusBadge: React.FC<{ r: number; bg: string; fg: string }> = ({ r, bg, fg }) => (
  <svg width={r * 2} height={r * 2} viewBox="0 0 44 44" style={{ flex: "none" }}>
    <circle cx="22" cy="22" r="22" fill={bg} />
    <path d="M18 7 H26 V18 H37 V26 H26 V37 H18 V26 H7 V18 H18 Z" fill={fg} />
  </svg>
);
const PinIcon = () => (
  <>
    <circle cx="10" cy="9" r="9" fill="#fff" />
    <path d="M4 14 L10 24 L16 14 Z" fill="#fff" />
    <circle cx="10" cy="6.5" r="2.6" fill={CRIMSON} />
    <path d="M5 13 Q5 9.5 10 9.5 Q15 9.5 15 13 Z" fill={CRIMSON} />
  </>
);
const DocIcon: React.FC<{ h?: number }> = ({ h = 15 }) => (
  <svg width={h * 0.8} height={h} viewBox="0 0 12 15" fill="none" stroke="#888">
    <path d="M1 .5 H8 L11 3.5 V14.5 H1 Z M8 .5 V3.5 H11" fill="#fff" />
  </svg>
);
const HomeIcon = () => (
  <svg width="16" height="16" viewBox="0 0 16 16" fill="#666">
    <path d="M8 1 L15 8 H13 V15 H9.5 V10 H6.5 V15 H3 V8 H1 Z" />
  </svg>
);
const MailIcon = () => (
  <MailSvg width="24" height="16" viewBox="0 0 24 16" fill="#fff" stroke="#505050" strokeWidth="1">
    <rect x="0.5" y="0.5" width="23" height="15" />
    <path d="M.5 .5 L12 9 L23.5 .5 M.5 15.5 L9 7 M23.5 15.5 L15 7" fill="none" />
  </MailSvg>
);

const StartOrb = () => (
  <svg width="38" height="38" viewBox="0 0 38 38">
    <defs>
      <radialGradient id="orb" cx="50%" cy="40%" r="60%">
        <stop offset="0" stopColor="#7cc0e8" />
        <stop offset="1" stopColor="#123f6e" />
      </radialGradient>
    </defs>
    <circle cx="19" cy="19" r="18" fill="url(#orb)" stroke="#0b2a4a" />
    <path d="M9 11 Q14 8 18 11 L17 18 Q13 16 8 18 Z" fill="#e8512e" />
    <path d="M20 11 Q24 13 29 11 L28 18 Q24 20 19 18 Z" fill="#7cc23f" />
    <path d="M8 20 Q13 18 17 20 L16 27 Q12 25 7 27 Z" fill="#3c9be0" />
    <path d="M19 20 Q24 22 28 20 L27 27 Q23 29 18 27 Z" fill="#f6c02c" />
    <path d="M3 15 Q19 -3 35 15 Q19 9 3 15 Z" fill="#fff" opacity=".3" />
  </svg>
);
const IeIcon = () => (
  <svg width="36" height="36" viewBox="0 0 36 36">
    <ellipse cx="18" cy="18" rx="18" ry="8" transform="rotate(-40 18 18)" fill="none" stroke="#e8c24a" strokeWidth="2" />
    <circle cx="17" cy="19" r="12" fill="#2a8fd8" />
    <circle cx="17" cy="19" r="6" fill="#bfe3f7" />
    <rect x="8" y="18" width="20" height="3" fill="#2a8fd8" />
    <path d="M17 24 L30 27 L24 32 L12 29 Z" fill="#2a8fd8" />
  </svg>
);
const FolderIcon = () => (
  <svg width="34" height="34" viewBox="0 0 34 34">
    <path d="M2 6 H12 L14 9 H32 V30 H2 Z" fill="#e2b84e" />
    <rect x="5" y="8" width="24" height="8" fill="#f5f5f0" />
    <rect x="8" y="5" width="6" height="4" fill="#d9403a" />
    <rect x="19" y="5" width="6" height="4" fill="#4aa84a" />
    <path d="M1 14 H33 L31 32 H3 Z" fill="#f6dc8a" />
    <path d="M10 24 H24 V32 H10 Z" fill="#4f9ad0" />
    <rect x="13" y="22" width="8" height="4" fill="#f0a030" />
  </svg>
);
const MediaIcon = () => (
  <svg width="30" height="32" viewBox="0 0 30 32">
    <rect x="9" y="3" width="19" height="26" fill="#8fb4cf" stroke="#5f8aaa" />
    <rect x="3" y="5" width="20" height="24" rx="2" fill="#e98a20" />
    <circle cx="13" cy="17" r="9" fill="#fff" />
    <path d="M10 11 L19 17 L10 23 Z" fill="#e0661a" />
  </svg>
);
const ChromeIcon = () => (
  <svg width="34" height="34" viewBox="0 0 34 34">
    <circle cx="17" cy="17" r="16" fill="#e0402f" />
    <path d="M17 17 L3 9 A16 16 0 0 0 12 32.2 Z" fill="#3aa64a" />
    <path d="M17 17 L31 9 A16 16 0 0 1 12 32.2 Z" fill="#f8c92c" />
    <circle cx="17" cy="17" r="8" fill="#fff" />
    <circle cx="17" cy="17" r="6" fill="#4a8fe0" />
  </svg>
);
const SkypeIcon = () => (
  <svg width="30" height="32" viewBox="0 0 30 32">
    <rect x="2" y="2" width="26" height="28" rx="11" fill="#1fa8ec" />
    <text x="15" y="25" textAnchor="middle" fontSize="24" fontWeight="700" fill="#fff" fontFamily="Liberation Sans, sans-serif">S</text>
  </svg>
);
const PptIcon = () => (
  <svg width="32" height="34" viewBox="0 0 32 34">
    <rect x="6" y="1" width="24" height="32" fill="#f4e6de" stroke="#a33" />
    <rect x="1" y="3" width="18" height="24" fill="#d8492a" />
    <text x="10" y="23" textAnchor="middle" fontSize="20" fontWeight="700" fill="#fff" fontFamily="Liberation Sans, sans-serif">P</text>
    <circle cx="22" cy="22" r="6" fill="#e88a5a" />
  </svg>
);
const LineIcon = () => (
  <svg width="34" height="34" viewBox="0 0 34 34">
    <rect x="1" y="1" width="32" height="32" rx="7" fill="#00b900" />
    <ellipse cx="17" cy="16" rx="13" ry="11" fill="#fff" />
    <path d="M14 25 L15 31 L21 26 Z" fill="#fff" />
    <text x="17" y="19" textAnchor="middle" fontSize="8" fontWeight="700" fill="#00b900" fontFamily="Liberation Sans, sans-serif">LINE</text>
  </svg>
);

/* ---------- content ---------- */
const CLINICS = [
  ["永恩中醫診所", "臺中市豐原區中山路343號1樓", "0.11 km"],
  ["光榮中醫診所", "臺中市豐原區中山路482號", "0.18 km"],
  ["泉和中醫診所", "臺中市豐原區市前街41號", "0.2 km"],
  ["永豐中醫診所", "臺中市豐原區中山路401號", "0.21 km"],
  ["德恩堂中醫診所", "臺中市豐原區中正路361號1樓", ""],
];
const MAIN = [
  { t: "醫療服務", bg: CRIMSON, c: "#f9e4e8", dot: "#fff", fg: CRIMSON, active: true },
  { t: "保健服務", bg: "#d3d3d3", c: "#2f8f55", dot: "#0a8a3e", fg: "#fff" },
  { t: "長期照顧", bg: "#fff", c: "#2a85cc", dot: "#0a6fd0", fg: "#fff" },
  { t: "藥事服務", bg: "#d3d3d3", c: "#55209a", dot: "#4b0c8e", fg: "#fff" },
  { t: "醫療器材", bg: "#fff", c: "#ef7a2a", dot: "#f36a10", fg: "#fff" },
  { t: "衛生所", bg: "#d3d3d3", c: "#6e5238", dot: "#5a2d0a", fg: "#fff" },
  { t: "其他服務", bg: "#fff", c: "#6a2a9a", dot: "#0d3c52", fg: "#fff" },
];
const SUB = ["診所就醫", "醫院就醫", "假牙裝置", "身障鑑定", "巴氏量表申請", "呼吸照護", "整合門診", "洗腎就醫", "輔具中心", "醫事檢驗", "復健服務", "救護車", "預防接種", "糖尿病照護", "急救責任醫院"];
const THIRD = ["醫學中心", "區域醫院", "地區醫院"];

export default function App() {
  return (
    <Screen>
      <Global />
      <TitleBar>
        <BlurText $x={240} $w={60} />
        <BlurText $x={400} $w={70} />
        <BlurText $x={590} $w={110} />
        <BlurText $x={740} $w={150} />
        <BlurText $x={800} $w={100} />
        <TabShape>
          <DocIcon h={14} />
          <TabTitle>樂齡行動導航</TabTitle>
          <X size={12} strokeWidth={3} color="#555" />
        </TabShape>
        <NewTab />
        <WinButtons>
          <WinBtn $w={27}><svg width="10" height="4"><rect width="10" height="3" y="1" fill="#fff" /></svg></WinBtn>
          <WinBtn $w={26}><svg width="10" height="11" fill="none" stroke="#334"><rect x="1.5" y="2.5" width="6" height="7" fill="#fff" /><path d="M3 1 H9 V8" /></svg></WinBtn>
          <WinBtn $w={50} $close><X size={13} strokeWidth={4} /></WinBtn>
        </WinButtons>
      </TitleBar>

      <Toolbar>
        <NavIcon $w={30} $c="#666"><ArrowLeft size={17} strokeWidth={3.2} /></NavIcon>
        <NavIcon $w={29} $c="#c4c4c4"><ArrowRight size={17} strokeWidth={3.2} /></NavIcon>
        <NavIcon $w={29} $c="#666"><RotateCw size={16} strokeWidth={3} /></NavIcon>
        <NavIcon $w={28} $c="#666"><HomeIcon /></NavIcon>
        <Omnibox>
          <DocIcon h={15} />
          <span>age-friendly.taichung.gov.tw/</span>
          <UrlHash>#</UrlHash>
          <Spacer />
          <ZoomIn size={16} color="#888" />
          <Star size={19} color="#888" strokeWidth={1.3} />
        </Omnibox>
        <Burger />
      </Toolbar>

      <Viewport>
        <Frame>
          <Header>
            <LogoBlock><Logo /></LogoBlock>
            <SearchBox>
              請輸入樂齡服務關鍵字
              <Search size={20} strokeWidth={3} color="#444" style={{ flex: "none", marginLeft: 5 }} />
            </SearchBox>
            <Nav>
              <NavTab $w={127} $bg="#f2f2f2" $clip="polygon(0 0,100% 0,87% 100%,0 100%)" $pl={15} $gap={16}>
                <MicIcon />
                <NavLabel>樂齡<br />福利</NavLabel>
              </NavTab>
              <NavTab $w={198} $bg="#fff" $clip="none" $pl={26} $gap={6}>
                <SproutIcon />
                <NavLabel>友善樂齡<br />城市種子</NavLabel>
              </NavTab>
              <NavTab $w={158} $bg="#f2f2f2" $clip="polygon(0 0,100% 0,100% 100%,10% 100%)" $pl={36} $gap={8}>
                <EditIcon />
                <NavLabel>系統<br />滿意度</NavLabel>
              </NavTab>
            </Nav>
          </Header>

          <Stage>
            <CityMap />
            <LeftColumn>
              <Sidebar>
                <Visits>瀏覽人次：00062498</Visits>
                <Tabs>
                  <TabCol>
                    <TabTop><RssBadge />樂齡活動</TabTop>
                    <TabCount $clip="polygon(0 0,100% 0,100% 100%,0 62%)">4</TabCount>
                  </TabCol>
                  <TabCol>
                    <TabTop $active><PeopleBadge />樂齡服務</TabTop>
                    <TabCount $active $clip="polygon(0 0,100% 0,100% 64%,0 100%)">710</TabCount>
                  </TabCol>
                </Tabs>
                <DistrictSelect>全部地區<SelectArrow>▼</SelectArrow></DistrictSelect>
                <ListHead>中醫</ListHead>
                <ClinicList>
                  {CLINICS.map(([n, a, d]) => (
                    <ClinicRow key={n}>
                      <ClinicName>{n}</ClinicName>
                      <ClinicAddr>{a}</ClinicAddr>
                      <ClinicDist>{d}</ClinicDist>
                    </ClinicRow>
                  ))}
                </ClinicList>
              </Sidebar>
              <HideBtn><HideTri>▲</HideTri>隱藏</HideBtn>
            </LeftColumn>

            <LocationBar>
              <LocPin $left={7} $top={0} width="20" height="25" viewBox="0 0 20 25"><PinIcon /></LocPin>
              <span>我的位置</span>
              <span>台灣台中市豐原區中興路136號</span>
            </LocationBar>
            <LocPin $left={678} $top={4} width="20" height="27" viewBox="0 0 20 25"><PinIcon /></LocPin>
            <ZoomOut />
            <MapType>地圖<Caret /></MapType>

            <Menu>
              <MainWrap>
                <MainCol>
                  {MAIN.map(m => (
                    <MainItem key={m.t} $bg={m.bg} $c={m.c} $active={m.active}>
                      <PlusBadge r={m.active ? 22 : 17} bg={m.dot} fg={m.fg} />
                      <MainText>{m.t}</MainText>
                    </MainItem>
                  ))}
                </MainCol>
                <CloseBtn><X size={17} strokeWidth={4} color="#fff" />關閉</CloseBtn>
              </MainWrap>
              <SubCol $w={195} $top={0}>
                {SUB.map((s, i) => (
                  <SubItem key={s} $pl={5} $tone={i === 1 ? "active" : i % 2 ? "grey" : "white"}>{s}</SubItem>
                ))}
              </SubCol>
              <SubCol $w={130} $top={49}>
                {THIRD.map((s, i) => (
                  <SubItem key={s} $pl={6} $tone={i === 0 ? "active" : i === 1 ? "grey" : "white"}>{s}</SubItem>
                ))}
              </SubCol>
            </Menu>
            <Tooltip>床數1000床以上，醫事人力約2000人。</Tooltip>
          </Stage>

          <Footer>
            <FootCell $w={325}>台中市政府衛生局 Copyright © 版權所有</FootCell>
            <FootCell $w={168} $pl={9}>電話：04-2526-5394</FootCell>
            <FootCell $w={193}>服務時間：週一至週五</FootCell>
            <FootCell $w={332} $pl={8}>地址：42053 台中市豐原區中興路 136 號</FootCell>
            <MailBox><MailIcon /></MailBox>
          </Footer>
        </Frame>
      </Viewport>

      <StatusBubble>age-friendly.taichung.gov.tw/#</StatusBubble>

      <Taskbar>
        <Orb><StartOrb /></Orb>
        <Grip $ml={6} />
        <TaskSlots>
          <TaskSlot $w={62} $mr={1}><IeIcon /></TaskSlot>
          <TaskSlot $w={61} $mr={1}><FolderIcon /></TaskSlot>
          <TaskSlot $w={52} $mr={10}><MediaIcon /></TaskSlot>
          <TaskSlot $w={54} $mr={9} $state="active"><ChromeIcon /></TaskSlot>
          <TaskSlot $w={58} $mr={4} $state="open"><SkypeIcon /></TaskSlot>
          <TaskSlot $w={57} $mr={5} $state="open"><PptIcon /></TaskSlot>
          <TaskSlot $w={53} $mr={0} $state="open"><LineIcon /></TaskSlot>
        </TaskSlots>
        <Tray>
          <Grip $ml={0} />
          <TrayIcons>
            <TrayBox $w={26}><svg width="18" height="18"><rect x="2" y="2" width="14" height="14" fill="#2a8fe0" /><text x="9" y="14" textAnchor="middle" fontSize="13" fill="#fff" fontFamily="Noto Sans CJK TC, sans-serif">す</text></svg></TrayBox>
            <TrayBox $w={23} $lang>A</TrayBox>
            <TrayBox $w={21} $lang><svg width="18" height="18"><rect x="1" y="2" width="16" height="14" fill="#fff" /><rect x="1" y="2" width="8" height="14" fill="#999" /></svg></TrayBox>
            <TrayBox $w={21} $lang><svg width="18" height="18"><path d="M2 3 H13 M2 6 H13 M2 9 H13 M2 12 H13 M2 15 H13" stroke="#fff" strokeWidth="1.4" /><path d="M11 5 L18 11 L14 12 L15 16 L13 16 Z" fill="#fff" stroke="#000" strokeWidth=".5" /></svg></TrayBox>
            <TrayBox $w={22}><svg width="16" height="16"><circle cx="8" cy="8" r="7.5" fill="#2438b8" stroke="#bcd" /><text x="8" y="12" textAnchor="middle" fontSize="11" fontWeight="700" fill="#fff" fontFamily="Liberation Sans, sans-serif">?</text></svg></TrayBox>
            <TrayBox $w={19}><svg width="12" height="20" fill="none" stroke="#fff"><rect x="2.5" y="2.5" width="5" height="4" /><path d="M4 4 V1.5 H10 V5 H8" /><path d="M3 13 H9 L6 16 Z" fill="#fff" /></svg></TrayBox>
            <TrayBox $w={22}><svg width="10" height="6"><path d="M0 6 L5 0 L10 6 Z" fill="#fff" /></svg></TrayBox>
            <TrayBox $w={25}><svg width="18" height="18"><path d="M1 6 H8 L10 9 H17 V17 H1 Z" fill="#1fa83a" /><path d="M6 6 V1 L14 4 L8 6" fill="#1fa83a" /><path d="M5 12 L8 15 L13 10" stroke="#fff" strokeWidth="2" fill="none" /></svg></TrayBox>
            <TrayBox $w={24}><svg width="18" height="18" fill="none" stroke="#fff" strokeWidth="1.4"><rect x="6" y="7" width="11" height="8" /><path d="M3 2 V7 M3 7 H8 M4 17 H15" /><rect x="1" y="1" width="5" height="4" fill="#fff" /></svg></TrayBox>
            <TrayBox $w={24}><svg width="18" height="16" fill="#fff"><path d="M1 5 H5 L10 1 V15 L5 11 H1 Z" /><path d="M12 5 Q14 8 12 11 M14 3 Q17 8 14 13" fill="none" stroke="#dde" /></svg></TrayBox>
            <TrayBox $w={24}><svg width="18" height="18"><path d="M9 2 L15 5 L9 8 L3 5 Z M3 7 L9 10 L15 7 L15 12 L9 15 L3 12 Z" fill="#bcd7ea" /><circle cx="13" cy="13" r="4" fill="#2aa84a" /></svg></TrayBox>
          </TrayIcons>
          <Clock>下午 11:35<br />2013/12/24</Clock>
          <ShowDesk />
        </Tray>
      </Taskbar>
    </Screen>
  );
}
